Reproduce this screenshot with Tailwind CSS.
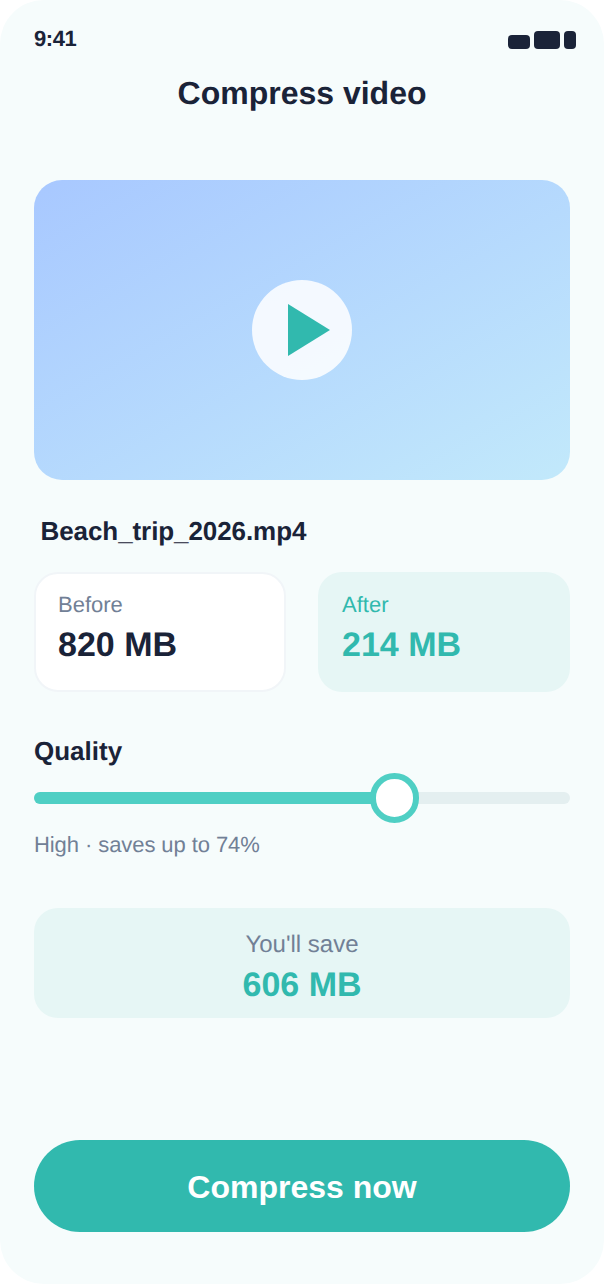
<!DOCTYPE html>
<html lang="en">
<head>
    <meta charset="UTF-8">
    <meta name="viewport" content="width=device-width, initial-scale=1.0">
    <title>Compress video</title>
    <script src="https://cdn.jsdelivr.net/npm/@tailwindcss/browser@4"></script>
</head>
<body class="bg-white font-['Liberation_Sans',Arial,sans-serif] [text-rendering:geometricPrecision]">
    <div class="w-[604px] h-[1284px] bg-[#f6fcfc] rounded-[44px] px-[34px] flex flex-col overflow-hidden">
        <!-- Status bar -->
        <div class="flex justify-between items-center h-[26px] mt-[26px]">
            <span class="text-[22px] leading-[26px] tracking-[-0.4px] font-bold text-[#1a2338]">9:41</span>
            <div class="flex items-end gap-[4px] mr-[-6px] mt-[2px]">
                <div class="w-[22px] h-[14px] rounded-[4px] bg-[#1a2338]"></div>
                <div class="w-[26px] h-[18px] rounded-[4px] bg-[#1a2338]"></div>
                <div class="w-[12px] h-[18px] rounded-[4px] bg-[#1a2338]"></div>
            </div>
        </div>

        <h1 class="mt-[21px] text-center text-[32px] leading-[40px] font-bold text-[#1a2338]">Compress video</h1>

        <!-- Video preview -->
        <div class="mt-[67px] h-[300px] rounded-[28px] bg-linear-to-br from-[#a8c8ff] to-[#c2e9fb] flex items-center justify-center">
            <div class="w-[100px] h-[100px] rounded-full bg-white/85 flex items-center justify-center">
                <svg width="42" height="52" viewBox="0 0 42 52" class="ml-[14px]"><polygon points="0,0 42,26 0,52" fill="#31b9ae"/></svg>
            </div>
        </div>

        <div class="mt-[36px] pl-[6.5px] text-[26px] leading-[30px] tracking-[-0.08px] font-bold text-[#1a2338]">Beach_trip_2026.mp4</div>

        <!-- Before / After -->
        <div class="mt-[26px] grid grid-cols-2 gap-[32px]">
            <div class="h-[120px] rounded-[24px] bg-white border-2 border-[#f1f5f8] px-[22px] pt-[18px]">
                <div class="text-[22px] leading-[26px] text-[#718096]">Before</div>
                <div class="mt-[7px] text-[34px] leading-[40px] font-bold text-[#1a2338]">820 MB</div>
            </div>
            <div class="h-[120px] rounded-[24px] bg-[#e6f6f5] px-[24px] pt-[20px]">
                <div class="text-[22px] leading-[26px] text-[#31b9ae]">After</div>
                <div class="mt-[7px] text-[34px] leading-[40px] font-bold text-[#31b9ae]">214 MB</div>
            </div>
        </div>

        <!-- Quality -->
        <div class="mt-[44px] text-[26px] leading-[30px] font-bold text-[#1a2338]">Quality</div>
        <div class="relative mt-[26px] h-[12px] rounded-full bg-[#e4eff0]">
            <div class="h-full w-[360px] rounded-full bg-[#4fcfc4]"></div>
            <div class="absolute left-[335.5px] top-[-19px] w-[49.5px] h-[49.5px] rounded-full bg-white border-[6px] border-[#4fcfc4]"></div>
        </div>
        <div class="mt-[28px] text-[22px] leading-[26px] tracking-[-0.08px] text-[#718096]">High · saves up to 74%</div>

        <!-- Savings -->
        <div class="mt-[50px] h-[110px] rounded-[24px] bg-[#e6f6f5] flex flex-col items-center pt-[24px]">
            <div class="text-[24px] leading-[26px] text-[#718096]">You'll save</div>
            <div class="mt-[7px] text-[34px] leading-[40px] font-bold text-[#31b9ae]">606 MB</div>
        </div>

        <button class="mt-[122px] h-[92px] pt-[2px] rounded-full bg-[#31b9ae] text-white text-[32px] font-bold">Compress now</button>
    </div>
</body>
</html>
